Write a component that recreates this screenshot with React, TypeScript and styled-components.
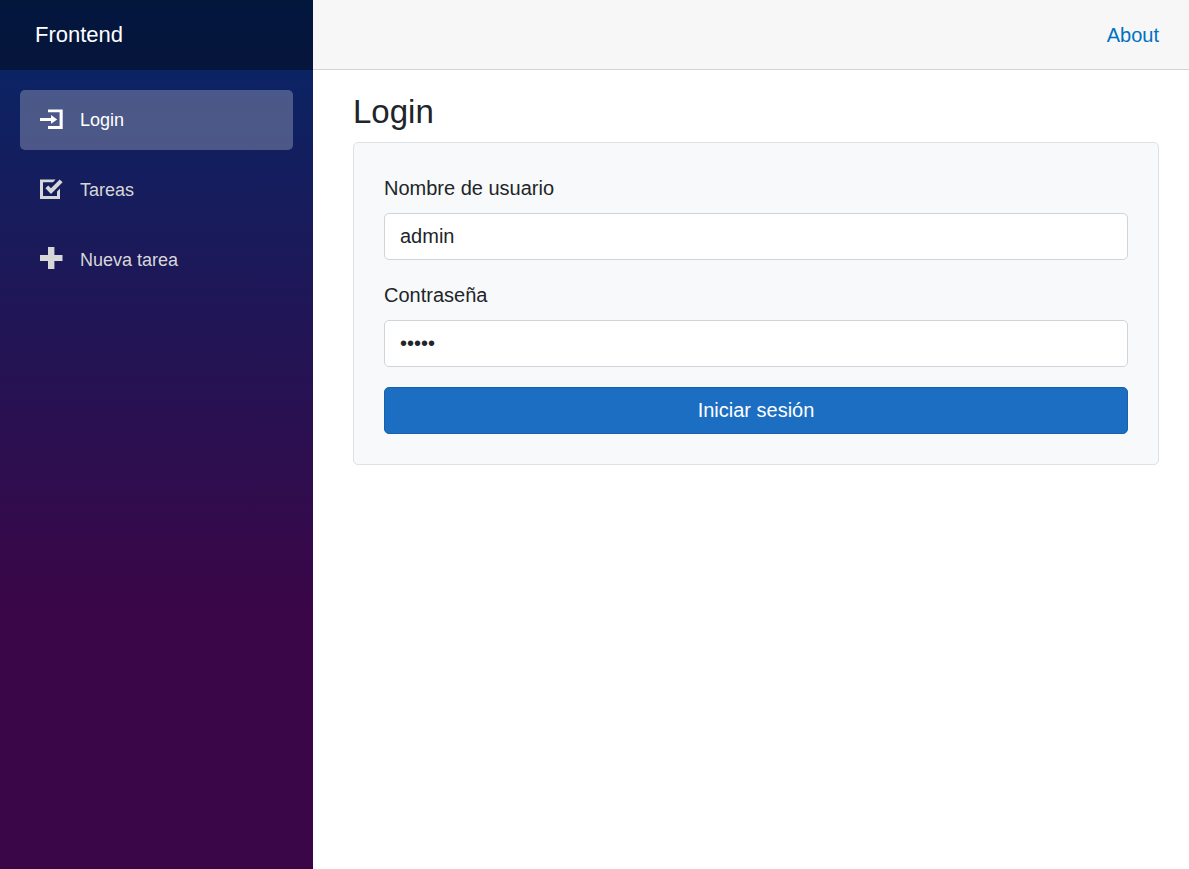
import React from "react";
import styled, { createGlobalStyle } from "styled-components";

const GlobalStyle = createGlobalStyle`
  *, *::before, *::after { box-sizing: border-box; }
  body {
    margin: 0;
    background: #fff;
    color: #212529;
    font-family: "Liberation Sans", Arial, sans-serif;
    font-size: 20px;
    line-height: 30px;
  }
`;

const Page = styled.div`
  display: flex;
  min-height: 100vh;
`;

const Sidebar = styled.div`
  flex: 0 0 313px;
  background-image: linear-gradient(180deg, rgb(5, 39, 103) 0%, #3a0647 70%);
`;

const BrandBar = styled.div`
  display: flex;
  align-items: center;
  height: 70px;
  padding: 0 35px;
  background: rgba(0, 0, 0, 0.4);
`;

const Brand = styled.a`
  color: #fff;
  font-size: 22px;
  text-decoration: none;
`;

const NavList = styled.nav`
  display: flex;
  flex-direction: column;
  gap: 10px;
  padding: 20px;
`;

const NavLink = styled.a<{ $active?: boolean }>`
  display: flex;
  align-items: center;
  height: 60px;
  padding: 0 20px;
  border-radius: 5px;
  background: ${(p) => (p.$active ? "rgba(255, 255, 255, 0.25)" : "transparent")};
  color: ${(p) => (p.$active ? "#fff" : "#d7d7d7")};
  font-size: 18px;
  text-decoration: none;
`;

const NavIcon = styled.svg`
  flex: none;
  width: 24px;
  height: 24px;
  margin: 0 16px 4px 0;
  fill: currentColor;
`;

const Content = styled.main`
  flex: 1;
  min-width: 0;
`;

const TopRow = styled.header`
  display: flex;
  align-items: center;
  justify-content: flex-end;
  height: 70px;
  padding: 0 30px;
  background: #f7f7f7;
  border-bottom: 1px solid #d6d5d5;
`;

const TopLink = styled.a`
  color: #0071c1;
  text-decoration: none;
`;

const Article = styled.article`
  padding: 22px 30px 0 40px;
`;

const Title = styled.h3`
  margin: 0 0 10px;
  font-size: 33px;
  font-weight: 400;
  line-height: 40px;
`;

const LoginForm = styled.form`
  display: flex;
  flex-direction: column;
  gap: 20px;
  padding: 30px;
  background: #f8f9fa;
  border: 1px solid #dee2e6;
  border-radius: 5px;
`;

const Field = styled.div`
  display: flex;
  flex-direction: column;
  gap: 10px;
`;

const Input = styled.input`
  width: 100%;
  height: 47px;
  padding: 0 15px;
  border: 1px solid #ced4da;
  border-radius: 5px;
  background: #fff;
  color: inherit;
  font: inherit;
  outline: none;
`;

const SubmitButton = styled.button`
  height: 47px;
  padding: 0 15px 2px;
  border: 1px solid #1861ac;
  border-radius: 5px;
  background: #1b6ec2;
  color: #fff;
  font: inherit;
  cursor: pointer;
`;

const navItems = [
  {
    label: "Login",
    path: "M8 3.4H22.7V23H8V20H19.6V6.2H8ZM0 12H11V9L17.2 13.4L11 17.8V15H0Z",
    active: true,
  },
  {
    label: "Tareas",
    path: "M0 3.4H15.6L13 6.2H3V20H17V15.4L20 12.4V23H0ZM19.7 3.4L22.6 6.3L11 17.9L5.4 12.3L8.2 9.4L11 12.2Z",
  },
  {
    label: "Nueva tarea",
    path: "M8 1H14.4V9H22.5V15H14.4V23H8V15H0V9H8Z",
  },
];

export default function App() {
  return (
    <>
      <GlobalStyle />
      <Page>
        <Sidebar>
          <BrandBar>
            <Brand href="#">Frontend</Brand>
          </BrandBar>
          <NavList>
            {navItems.map((item) => (
              <NavLink
                key={item.label}
                href="#"
                $active={item.active}
                aria-current={item.active ? "page" : undefined}
              >
                <NavIcon viewBox="0 0 24 24" aria-hidden="true">
                  <path d={item.path} />
                </NavIcon>
                {item.label}
              </NavLink>
            ))}
          </NavList>
        </Sidebar>
        <Content>
          <TopRow>
            <TopLink href="#">About</TopLink>
          </TopRow>
          <Article>
            <Title>Login</Title>
            <LoginForm onSubmit={(e) => e.preventDefault()}>
              <Field>
                <label htmlFor="username">Nombre de usuario</label>
                <Input id="username" type="text" defaultValue="admin" />
              </Field>
              <Field>
                <label htmlFor="password">Contraseña</label>
                <Input id="password" type="password" defaultValue="admin" />
              </Field>
              <SubmitButton type="submit">Iniciar sesión</SubmitButton>
            </LoginForm>
          </Article>
        </Content>
      </Page>
    </>
  );
}
